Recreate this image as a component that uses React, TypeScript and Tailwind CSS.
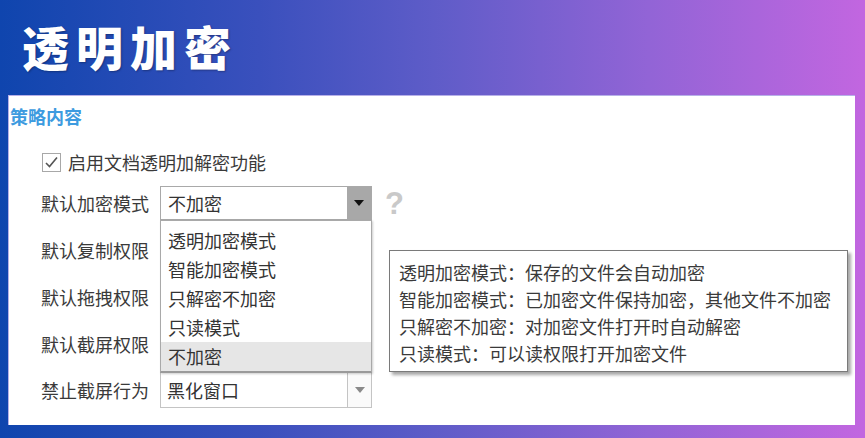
import React from "react";

const FONT = { fontFamily: '"Noto Sans CJK SC", "Microsoft YaHei", sans-serif' };

function Arrow({ color }: { color: string }) {
  return (
    <svg width="10" height="6" viewBox="0 0 10 6">
      <path d="M0 0 L10 0 L5 6 Z" fill={color} />
    </svg>
  );
}

function Row({ label, h, children }: { label: string; h: string; children?: React.ReactNode }) {
  return (
    <div className={`flex items-center ${h}`}>
      <div className="w-[151px] shrink-0 pl-[32px] text-[18px] leading-none text-[#3a3a3a] whitespace-nowrap">{label}</div>
      {children}
    </div>
  );
}

export default function App() {
  const items = ["透明加密模式", "智能加密模式", "只解密不加密", "只读模式", "不加密"];
  const tips = [
    "透明加密模式：保存的文件会自动加密",
    "智能加密模式：已加密文件保持加密，其他文件不加密",
    "只解密不加密：对加密文件打开时自动解密",
    "只读模式：可以读权限打开加密文件",
  ];
  return (
    <div
      className="w-[865px] h-[438px] flex flex-col overflow-hidden bg-[linear-gradient(90deg,#0f45ae_0%,#3a50bd_30%,#5e5cc8_50%,#9264d6_75%,#c266e0_100%)]"
      style={FONT}
    >
      <div className="h-[95px] shrink-0 flex items-center pl-[22px] pb-[4px]">
        <div className="text-[47px] font-black tracking-[7px] text-white leading-none [text-shadow:1px_1px_2px_rgba(0,0,0,0.3)]">
          透明加密
        </div>
      </div>
      <div className="relative shrink-0 ml-[8px] mr-[10px] h-[330px] bg-white border-l border-t border-[#b7b0e8]">
        <div className="pt-[8px] pl-[1px] text-[18px] leading-[24px] font-bold text-[#3d9be0]">策略内容</div>
        <div className="flex items-center gap-[7px] pl-[33px] mt-[18px] h-[32px]">
          <svg width="19" height="19" viewBox="0 0 19 19">
            <rect x="0.5" y="0.5" width="18" height="18" fill="#fff" stroke="#a8a8a8" />
            <path d="M4 10 L7.5 13.5 L15 4.5" fill="none" stroke="#555" strokeWidth="1.6" />
          </svg>
          <span className="text-[18px] leading-none text-[#3a3a3a]">启用文档透明加解密功能</span>
        </div>
        <div className="mt-[8px] flex flex-col">
          <Row label="默认加密模式" h="h-[34px]">
            <div className="flex w-[212px] h-[34px] border border-[#a9a9a9]">
              <div className="flex-1 flex items-center pl-[7px] text-[18px] text-[#333]">不加密</div>
              <div className="w-[24px] bg-[#a8a8a8] flex items-center justify-center">
                <Arrow color="#111" />
              </div>
            </div>
            <div className="ml-[13px] text-[31px] font-bold text-[#c9c9c9] leading-none" style={{ fontFamily: '"Liberation Sans", sans-serif' }}>?</div>
          </Row>
          <div className="h-[6px]" />
          <Row label="默认复制权限" h="h-[47px]" />
          <Row label="默认拖拽权限" h="h-[47px]" />
          <Row label="默认截屏权限" h="h-[47px]" />
          <Row label="禁止截屏行为" h="h-[46px]">
            <div className="flex w-[212px] h-[36px] border border-[#c4c4c4]">
              <div className="flex-1 flex items-center pl-[6px] text-[18px] text-[#333]">黑化窗口</div>
              <div className="w-[24px] border-l border-[#c4c4c4] bg-[#fafafa] flex items-center justify-center">
                <Arrow color="#8a8a8a" />
              </div>
            </div>
          </Row>
        </div>

        <div className="absolute left-[151px] top-[124px] w-[212px] h-[153px] bg-white border border-[#a9a9a9] border-b-2 border-b-[#9a9a9a] pt-[5px] shadow-[1px_1px_2px_rgba(0,0,0,0.2)]">
          {items.map((t, i) => (
            <div
              key={t}
              className={`h-[29px] flex items-center pl-[7px] text-[18px] text-[#333] ${i === 4 ? "bg-[#e6e6e6]" : ""}`}
            >
              {t}
            </div>
          ))}
        </div>

        <div className="absolute left-[380px] top-[154px] w-[459px] h-[122px] bg-white border border-[#7a7a7a] shadow-[3px_3px_3px_rgba(0,0,0,0.35)] pl-[9px] pt-[8px]">
          {tips.map((t) => (
            <div key={t} className="h-[27px] flex items-center text-[18px] text-[#3a3a3a] whitespace-nowrap">
              {t}
            </div>
          ))}
        </div>
      </div>
    </div>
  );
}
